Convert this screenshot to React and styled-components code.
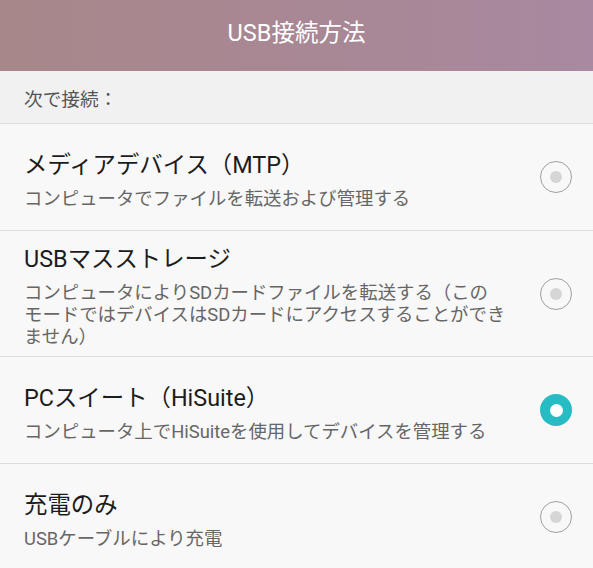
import React from 'react'
import styled, {createGlobalStyle} from 'styled-components'

const GlobalStyle = createGlobalStyle`
	html, body {
		margin: 0;
		padding: 0;
		background: #f8f8f8;
	}
	body {
		font-family: Roboto, "Noto Sans CJK JP", sans-serif;
	}
`

const Header = styled.div`
	height: 71px;
	display: flex;
	align-items: center;
	justify-content: center;
	background: linear-gradient(to right, #a8878a, #a8889a 80%, #a78aa1);
	color: #fff;
	font-size: 23.5px;
	padding-bottom: 10px;
	box-sizing: border-box;
`

const SubHeader = styled.div`
	height: 53px;
	box-sizing: border-box;
	display: flex;
	align-items: center;
	padding: 0 24px;
	background: #f1f1f1;
	border-bottom: 1px solid #dedede;
	color: #555;
	font-size: 18.7px;
`

const Item = styled.div`
	min-height: 107px;
	box-sizing: border-box;
	display: flex;
	align-items: center;
	padding: 13px 21px 8px 24px;
	border-bottom: 1px solid #dcdcdc;
	background: #f8f8f8;
`

const Texts = styled.div`
	flex: 1;
	display: flex;
	flex-direction: column;
	gap: 8px;
`

const Title = styled.div`
	font-size: 23.4px;
	line-height: 30px;
	color: #1c1c1c;
`

const Sub = styled.div`
	font-size: 18.4px;
	line-height: 22px;
	color: #666;
	white-space: pre-line;
`

const Radio = styled.div`
	width: 32px;
	height: 32px;
	box-sizing: border-box;
	border-radius: 50%;
	flex-shrink: 0;
	margin: 0 0 5px 20px;
	display: flex;
	align-items: center;
	justify-content: center;
	border: ${p => p.checked ? 'none' : '1.5px solid #a0a0a0'};
	background: ${p => p.checked ? '#27bcc3' : 'transparent'};

	&::after {
		content: '';
		width: ${p => p.checked ? '13px' : '12px'};
		height: ${p => p.checked ? '13px' : '12px'};
		border-radius: 50%;
		background: ${p => p.checked ? '#fff' : '#d6d6d6'};
	}
`

const options = [
	{title: 'メディアデバイス（MTP）', sub: 'コンピュータでファイルを転送および管理する'},
	{title: 'USBマスストレージ', sub: 'コンピュータによりSDカードファイルを転送する（この\nモードではデバイスはSDカードにアクセスすることができ\nません）'},
	{title: 'PCスイート（HiSuite）', sub: 'コンピュータ上でHiSuiteを使用してデバイスを管理する', checked: true},
	{title: '充電のみ', sub: 'USBケーブルにより充電'},
]

const App = () => {
	return (
		<>
			<GlobalStyle />
			<Header>USB接続方法</Header>
			<SubHeader>次で接続：</SubHeader>
			{options.map(o => (
				<Item key={o.title}>
					<Texts>
						<Title>{o.title}</Title>
						<Sub>{o.sub}</Sub>
					</Texts>
					<Radio checked={o.checked} />
				</Item>
			))}
		</>
	)
}

export default App
